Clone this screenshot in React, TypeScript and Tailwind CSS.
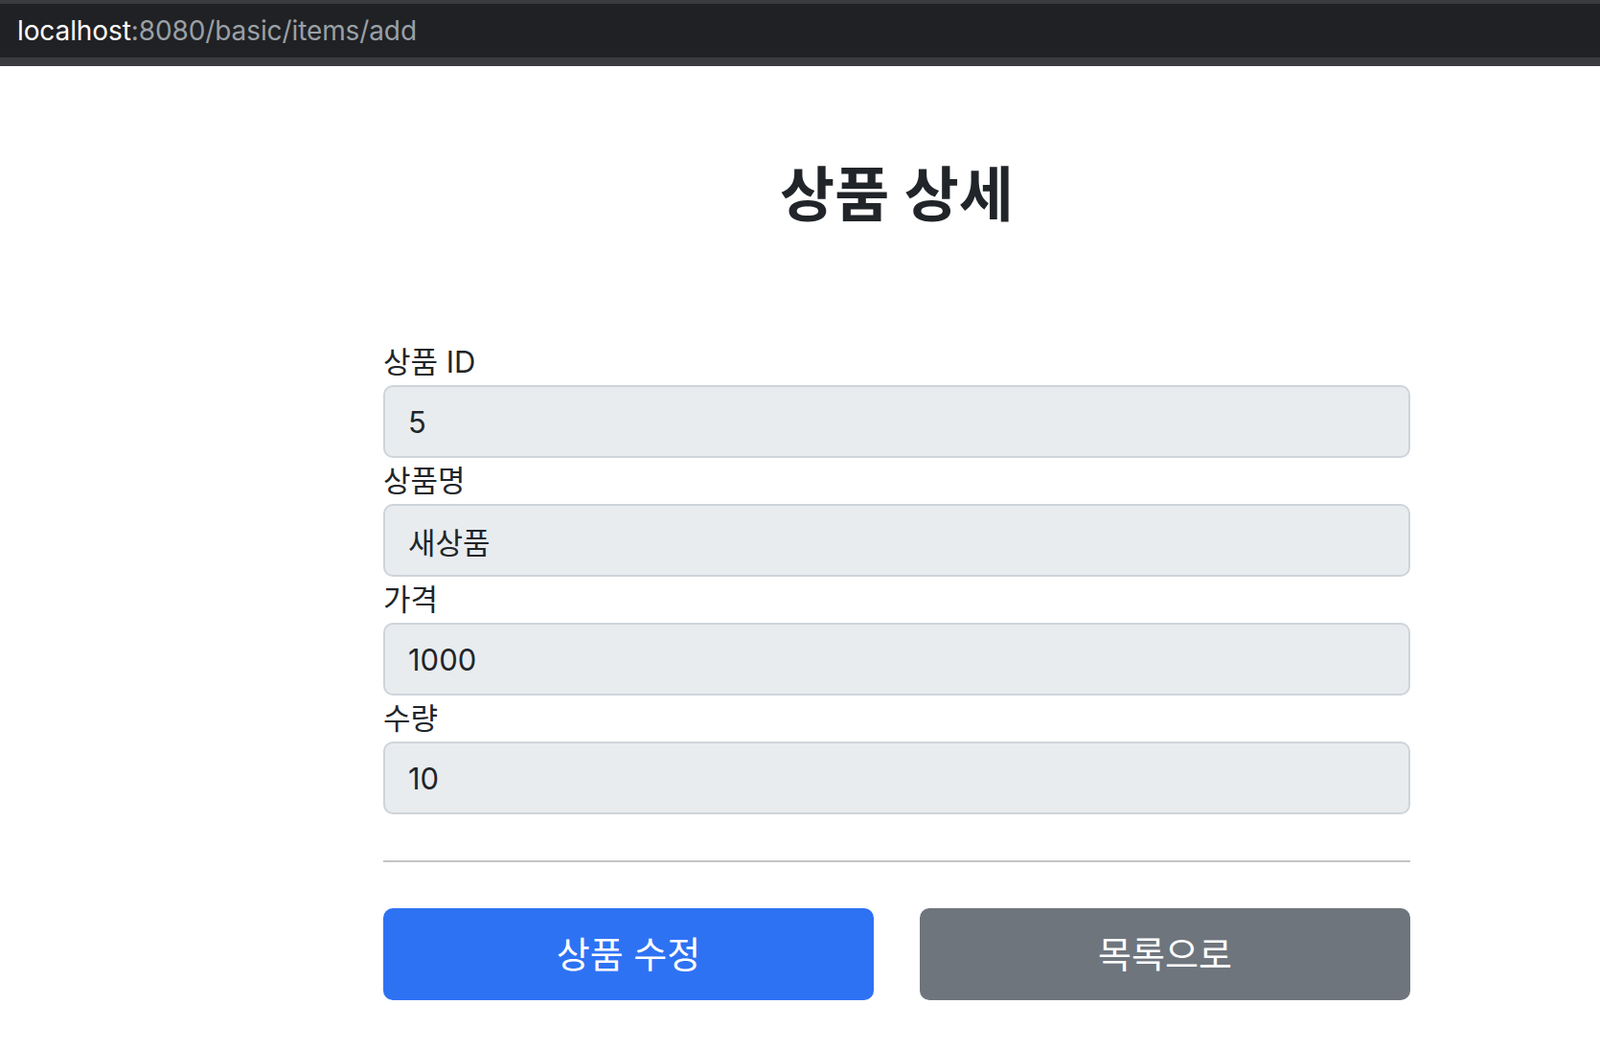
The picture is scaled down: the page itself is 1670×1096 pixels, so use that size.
const font = { fontFamily: 'Inter, "Noto Sans CJK KR", sans-serif' }

type Field = { label: string; value: string }

const fields: Field[] = [
  { label: "상품 ID", value: "5" },
  { label: "상품명", value: "새상품" },
  { label: "가격", value: "1000" },
  { label: "수량", value: "10" },
]

export default function App() {
  return (
    <div className="min-h-[1096px] bg-white text-[#212529] font-['Inter','Noto_Sans_CJK_KR',sans-serif]">
      {/* address bar */}
      <div className="h-[69px] bg-[#3a3b3f] pt-[4px] pb-[9px]">
        <div className="h-full bg-[#202124] flex items-center pl-[18px] text-[28px] tracking-[-0.1px]">
          <span className="text-white">localhost</span>
          <span className="text-[#9aa0a6]">:8080/basic/items/add</span>
        </div>
      </div>

      <div className="ml-[400px] w-[1072px]">
        <div className="pt-[96px] pb-[96px] text-center">
          <h2 className="text-[62px] leading-[77px] font-semibold mb-[16px]">상품 상세</h2>
        </div>

        <form>
          {fields.map((f) => (
            <div key={f.label}>
              <label className="block text-[31px] leading-[48px]">{f.label}</label>
              <input
                readOnly
                value={f.value}
                className="block w-full h-[76px] px-[24px] text-[31px] bg-[#e9ecef] border-2 border-[#ced4da] rounded-[10px] outline-none"
                style={font}
              />
            </div>
          ))}

          <hr className="my-[48px] border-t-2 border-[#c4c4c4]" />

          <div className="flex gap-[48px]">
            <button
              type="button"
              className="flex-1 h-[96px] rounded-[10px] bg-[#2e72f4] text-white text-[38px]"
            >
              상품 수정
            </button>
            <button
              type="button"
              className="flex-1 h-[96px] rounded-[10px] bg-[#6e757d] text-white text-[38px]"
            >
              목록으로
            </button>
          </div>
        </form>
      </div>
    </div>
  )
}
